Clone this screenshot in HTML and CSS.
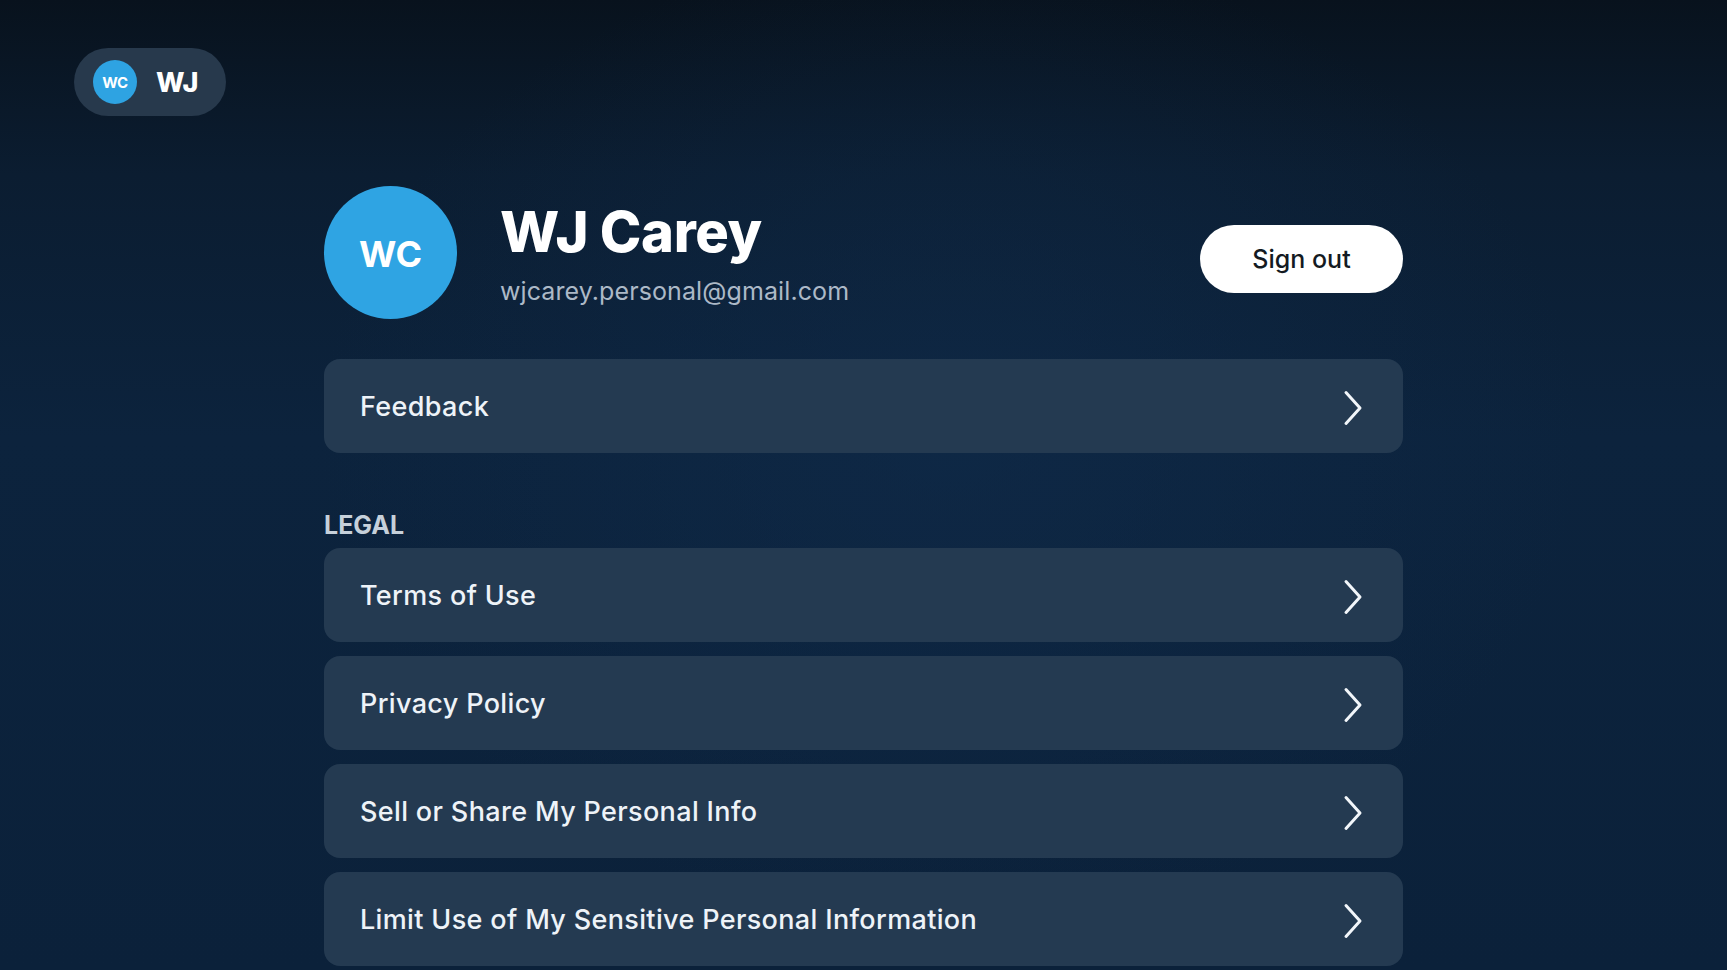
FILE: index.html
```html
<!DOCTYPE html>
<html lang="en">
<head>
<meta charset="utf-8">
<title>Account</title>
<link rel="stylesheet" href="styles.css">
</head>
<body>
<header class="topbar">
  <div class="user-pill">
    <span class="mini-avatar">WC</span>
    <span class="pill-name">WJ</span>
  </div>
</header>
<main class="account">
  <section class="profile">
    <div class="avatar">WC</div>
    <div class="profile-info">
      <h1 class="name">WJ Carey</h1>
      <div class="email">wjcarey.personal@gmail.com</div>
    </div>
    <button class="signout">Sign out</button>
  </section>

  <a class="row feedback-row" href="#">
    <span class="row-label">Feedback</span>
    <svg class="chev" width="20" height="36" viewBox="0 0 20 36"><path d="M3 2.5 L17 18 L3 33.5" fill="none" stroke="#f2f6fa" stroke-width="3" stroke-linecap="round" stroke-linejoin="round"/></svg>
  </a>

  <h2 class="section-label">LEGAL</h2>
  <div class="rows">
    <a class="row" href="#">
      <span class="row-label">Terms of Use</span>
      <svg class="chev" width="20" height="36" viewBox="0 0 20 36"><path d="M3 2.5 L17 18 L3 33.5" fill="none" stroke="#f2f6fa" stroke-width="3" stroke-linecap="round" stroke-linejoin="round"/></svg>
    </a>
    <a class="row" href="#">
      <span class="row-label">Privacy Policy</span>
      <svg class="chev" width="20" height="36" viewBox="0 0 20 36"><path d="M3 2.5 L17 18 L3 33.5" fill="none" stroke="#f2f6fa" stroke-width="3" stroke-linecap="round" stroke-linejoin="round"/></svg>
    </a>
    <a class="row" href="#">
      <span class="row-label">Sell or Share My Personal Info</span>
      <svg class="chev" width="20" height="36" viewBox="0 0 20 36"><path d="M3 2.5 L17 18 L3 33.5" fill="none" stroke="#f2f6fa" stroke-width="3" stroke-linecap="round" stroke-linejoin="round"/></svg>
    </a>
    <a class="row" href="#">
      <span class="row-label">Limit Use of My Sensitive Personal Information</span>
      <svg class="chev" width="20" height="36" viewBox="0 0 20 36"><path d="M3 2.5 L17 18 L3 33.5" fill="none" stroke="#f2f6fa" stroke-width="3" stroke-linecap="round" stroke-linejoin="round"/></svg>
    </a>
  </div>
</main>
</body>
</html>
```
FILE: styles.css
```css
* { box-sizing: border-box; }

html, body {
  margin: 0;
  padding: 0;
  height: 970px;
  overflow: hidden;
}

body {
  font-family: Inter, "Noto Sans", sans-serif;
  color: #ffffff;
  background:
    radial-gradient(ellipse 900px 700px at 55% 45%, rgba(16, 44, 76, 0.55), rgba(16, 44, 76, 0) 70%),
    linear-gradient(180deg, #08121d 0%, #0b1d31 18%, #0c233d 45%, #0b213a 100%);
}

.topbar {
  padding: 48px 0 0 74px;
  display: flex;
}

.user-pill {
  display: flex;
  align-items: center;
  gap: 19px;
  height: 68px;
  padding: 0 28px 0 19px;
  border-radius: 34px;
  background: #27394c;
}

.mini-avatar {
  width: 44px;
  height: 44px;
  border-radius: 50%;
  background: #2ea3e2;
  display: flex;
  align-items: center;
  justify-content: center;
  font-size: 15px;
  font-weight: 700;
  letter-spacing: -0.5px;
}

.pill-name {
  font-size: 27px;
  font-weight: 800;
  letter-spacing: -0.5px;
}

.account {
  width: 1079px;
  margin: 70px 0 0 324px;
}

.profile {
  display: flex;
  align-items: center;
  height: 133px;
}

.avatar {
  width: 133px;
  height: 133px;
  flex: none;
  border-radius: 50%;
  background: #2fa4e3;
  display: flex;
  align-items: center;
  justify-content: center;
  font-size: 36px;
  font-weight: 700;
  padding-top: 2px;
}

.profile-info {
  flex: 1;
  margin-left: 43px;
  padding-top: 4px;
}

.name {
  margin: 0;
  font-size: 56px;
  line-height: 1;
  font-weight: 800;
  letter-spacing: -0.4px;
}

.email {
  margin-top: 16px;
  font-size: 25px;
  line-height: 1.2;
  color: #acb9c7;
  letter-spacing: 0.1px;
}

.signout {
  width: 203px;
  height: 68px;
  margin-top: 12px;
  border: none;
  border-radius: 34px;
  background: #ffffff;
  color: #141a22;
  font-family: Inter, "Noto Sans", sans-serif;
  font-size: 25px;
  font-weight: 500;
}

.row {
  display: flex;
  align-items: center;
  justify-content: space-between;
  height: 94px;
  padding: 0 40px 0 36px;
  border-radius: 16px;
  background: #243a51;
  color: #eef3f8;
  text-decoration: none;
}

.feedback-row {
  margin-top: 40px;
}

.row-label {
  font-size: 27px;
  font-weight: 500;
  letter-spacing: 0.35px;
}

.chev {
  display: block;
  flex: none;
  margin-top: 4px;
}

.section-label {
  margin: 57px 0 8px;
  font-size: 25px;
  line-height: 30px;
  font-weight: 700;
  color: #c6d0da;
}

.rows {
  display: flex;
  flex-direction: column;
  gap: 14px;
}
```
